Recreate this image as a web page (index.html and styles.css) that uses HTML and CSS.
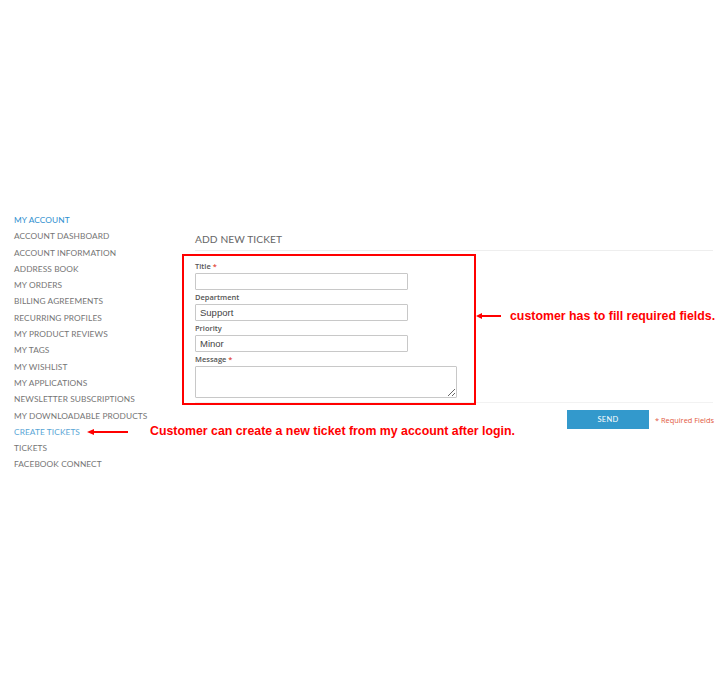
FILE: index.html
```html
<!DOCTYPE html>
<html lang="en">
<head>
  <meta charset="UTF-8" />
  <title>Add New Ticket</title>
  <link rel="stylesheet" href="styles.css">
</head>
<body>

  <div class="page">
    <ul class="sidebar">
      <li class="current">MY ACCOUNT</li>
      <li>ACCOUNT DASHBOARD</li>
      <li>ACCOUNT INFORMATION</li>
      <li>ADDRESS BOOK</li>
      <li>MY ORDERS</li>
      <li>BILLING AGREEMENTS</li>
      <li>RECURRING PROFILES</li>
      <li>MY PRODUCT REVIEWS</li>
      <li>MY TAGS</li>
      <li>MY WISHLIST</li>
      <li>MY APPLICATIONS</li>
      <li>NEWSLETTER SUBSCRIPTIONS</li>
      <li>MY DOWNLOADABLE PRODUCTS</li>
      <li class="active">CREATE TICKETS</li>
      <li>TICKETS</li>
      <li>FACEBOOK CONNECT</li>
    </ul>

    <div class="main">
      <h2 class="title">ADD NEW TICKET</h2>

      <form class="ticket-form">
        <div class="field">
          <label>Title <span class="req">*</span></label>
          <input type="text" class="input">
        </div>
        <div class="field">
          <label>Department</label>
          <input type="text" class="input" value="Support">
        </div>
        <div class="field">
          <label>Priority</label>
          <input type="text" class="input" value="Minor">
        </div>
        <div class="field">
          <label>Message <span class="req">*</span></label>
          <textarea class="textarea"></textarea>
        </div>
      </form>

      <div class="actions">
        <button class="send">SEND</button>
        <span class="required-note">* Required Fields</span>
      </div>
    </div>

    <!-- annotations drawn over the screenshot -->
    <div class="highlight"></div>

    <svg class="arrow arrow-form" width="26" height="8" viewBox="0 0 26 8">
      <line x1="3" y1="4" x2="25" y2="4" stroke="#f00" stroke-width="2"/>
      <polygon points="0,4 6,1 6,7" fill="#f00"/>
    </svg>
    <p class="note note-form">customer has to fill required fields.</p>

    <svg class="arrow arrow-menu" width="42" height="8" viewBox="0 0 42 8">
      <line x1="3" y1="4" x2="41" y2="4" stroke="#f00" stroke-width="2"/>
      <polygon points="0,4 7,1 7,7" fill="#f00"/>
    </svg>
    <p class="note note-menu">Customer can create a new ticket from my account after login.</p>
  </div>

</body>
</html>
```

FILE: styles.css
```css
* {
  margin: 0;
  padding: 0;
  box-sizing: border-box;
}

body {
  background: #fff;
  font-family: 'Lato', sans-serif;
  color: #666;
}

.page {
  position: relative;
  width: 725px;
  height: 680px;
  display: flex;
  padding: 212px 12px 0 14px;
}

.sidebar {
  list-style: none;
  width: 181px;
  flex-shrink: 0;
}

.sidebar li {
  font-size: 8.3px;
  line-height: 16.3px;
  color: #757575;
  letter-spacing: 0.1px;
  white-space: nowrap;
}

.sidebar li.current {
  color: #2f8fcf;
}

.sidebar li.active {
  color: #5aa6d6;
}

.main {
  flex: 1;
  padding-top: 20px;
}

.title {
  font-size: 10.2px;
  font-weight: 400;
  line-height: 14px;
  color: #666;
  letter-spacing: 0.1px;
  padding-bottom: 4px;
  border-bottom: 1px solid #eee;
}

.ticket-form {
  display: flex;
  flex-direction: column;
  gap: 2px;
  padding-top: 10px;
}

.field label {
  display: block;
  font-family: 'Open Sans', sans-serif;
  font-size: 7.5px;
  font-weight: 600;
  line-height: 10px;
  color: #555;
  margin-bottom: 2px;
}

.req {
  color: #e24a3a;
}

.input {
  display: block;
  width: 213px;
  height: 17px;
  border: 1px solid #c8c8c8;
  border-radius: 1px;
  padding: 0 4px;
  font-family: 'Liberation Sans', sans-serif;
  font-size: 9.5px;
  color: #444;
  background: #fff;
}

.textarea {
  display: block;
  width: 262px;
  height: 32px;
  border: 1px solid #c8c8c8;
  border-radius: 1px;
  resize: vertical;
  background: #fff;
}

.actions {
  margin-top: 4px;
  border-top: 1px solid #f2f2f2;
  padding-top: 7px;
  display: flex;
  justify-content: flex-end;
  align-items: center;
  gap: 6px;
}

.send {
  width: 82px;
  height: 19px;
  background: #3399cc;
  color: #fff;
  border: none;
  font-family: 'Lato', sans-serif;
  font-size: 7.5px;
  letter-spacing: 0.3px;
}

.required-note {
  font-family: 'Open Sans', sans-serif;
  font-size: 7.4px;
  color: #e2583e;
  width: 58px;
  white-space: nowrap;
}

.highlight {
  position: absolute;
  left: 182px;
  top: 254px;
  width: 294px;
  height: 151px;
  border: 2px solid #f00;
}

.arrow {
  position: absolute;
}

.arrow-form {
  left: 476px;
  top: 312px;
}

.arrow-menu {
  left: 87px;
  top: 428px;
}

.note {
  position: absolute;
  font-family: 'Liberation Sans', sans-serif;
  font-weight: 700;
  font-size: 12.35px;
  line-height: 14px;
  color: #f00;
  white-space: nowrap;
}

.note-form {
  left: 510px;
  top: 309px;
}

.note-menu {
  left: 150px;
  top: 424px;
}
```
